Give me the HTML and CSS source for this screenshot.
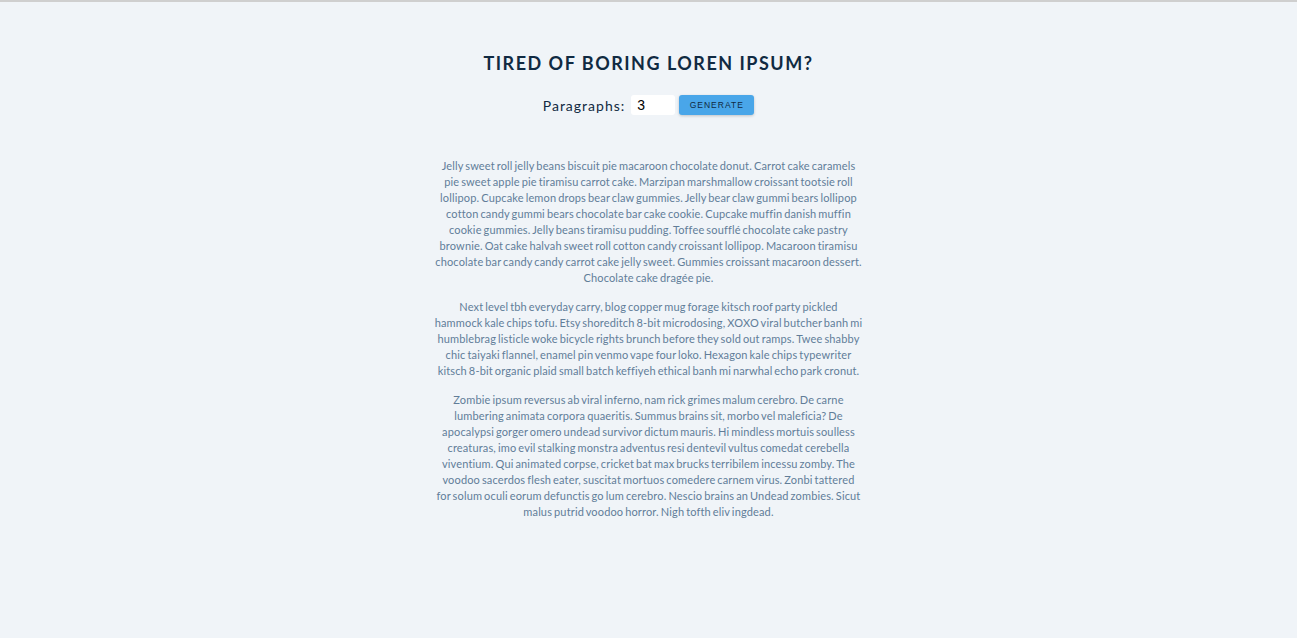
FILE: index.html
```html
<!DOCTYPE html>
<html lang="en">
<head>
<meta charset="utf-8">
<title>Lorem Ipsum Generator</title>
<link rel="stylesheet" href="styles.css">
</head>
<body>
<div class="topline"></div>
<section class="section-center">
  <h3 class="title">tired of boring loren ipsum?</h3>
  <form class="lorem-form">
    <label for="amount" class="label">paragraphs:</label>
    <input type="number" id="amount" class="amount" value="3">
    <button type="button" class="btn">generate</button>
  </form>
  <article class="lorem-text">
    <p>Jelly sweet roll jelly beans biscuit pie macaroon chocolate donut. Carrot cake caramels pie sweet apple pie tiramisu carrot cake. Marzipan marshmallow croissant tootsie roll lollipop. Cupcake lemon drops bear claw gummies. Jelly bear claw gummi bears lollipop cotton candy gummi bears chocolate bar cake cookie. Cupcake muffin danish muffin cookie gummies. Jelly beans tiramisu pudding. Toffee soufflé chocolate cake pastry brownie. Oat cake halvah sweet roll cotton candy croissant lollipop. Macaroon tiramisu chocolate bar candy candy carrot cake jelly sweet. Gummies croissant macaroon dessert. Chocolate cake dragée pie.</p>
    <p>Next level tbh everyday carry, blog copper mug forage kitsch roof party pickled hammock kale chips tofu. Etsy shoreditch 8-bit microdosing, XOXO viral butcher banh mi humblebrag listicle woke bicycle rights brunch before they sold out ramps. Twee shabby chic taiyaki flannel, enamel pin venmo vape four loko. Hexagon kale chips typewriter kitsch 8-bit organic plaid small batch keffiyeh ethical banh mi narwhal echo park cronut.</p>
    <p>Zombie ipsum reversus ab viral inferno, nam rick grimes malum cerebro. De carne lumbering animata corpora quaeritis. Summus brains sit, morbo vel maleficia? De apocalypsi gorger omero undead survivor dictum mauris. Hi mindless mortuis soulless creaturas, imo evil stalking monstra adventus resi dentevil vultus comedat cerebella viventium. Qui animated corpse, cricket bat max brucks terribilem incessu zomby. The voodoo sacerdos flesh eater, suscitat mortuos comedere carnem virus. Zonbi tattered for solum oculi eorum defunctis go lum cerebro. Nescio brains an Undead zombies. Sicut malus putrid voodoo horror. Nigh tofth eliv ingdead.</p>
  </article>
</section>
</body>
</html>
```
FILE: styles.css
```css
* { box-sizing: border-box; }
html, body { margin: 0; padding: 0; }
body {
  background: #f0f4f8;
  font-family: Lato, "Open Sans", sans-serif;
  color: #102a42;
  min-height: 100vh;
}
.topline {
  height: 2px;
  background: #cfcfcf;
}
.section-center {
  width: 430px;
  margin: 0 auto;
  padding-top: 49px;
  text-align: center;
}
.title {
  margin: 0;
  font-size: 18px;
  line-height: 24px;
  font-weight: 700;
  letter-spacing: 1.5px;
  text-transform: uppercase;
  color: #102a42;
}
.lorem-form {
  display: flex;
  justify-content: center;
  align-items: center;
  margin-top: 20px;
  height: 20px;
}
.label {
  font-size: 14px;
  letter-spacing: 1px;
  text-transform: capitalize;
  color: #102a42;
  margin-right: 6px;
}
.amount {
  width: 44px;
  height: 20px;
  border: none;
  border-radius: 3px;
  background: #fff;
  padding: 0 6px;
  font-family: "Liberation Sans", Arial, sans-serif;
  font-size: 14px;
  color: #000;
  margin-right: 4px;
  -moz-appearance: textfield;
}
.amount::-webkit-inner-spin-button,
.amount::-webkit-outer-spin-button { -webkit-appearance: none; margin: 0; }
.btn {
  width: 75px;
  height: 20px;
  border: none;
  border-radius: 3px;
  background: #49a6e9;
  color: #102a42;
  font-family: "Liberation Sans", Arial, sans-serif;
  font-size: 8.5px;
  letter-spacing: 1px;
  text-transform: uppercase;
  box-shadow: 0 1px 3px rgba(0,0,0,0.2);
  padding: 0;
}
.lorem-text {
  width: 427.8px;
  margin: 43px auto 0;
}
.lorem-text p {
  margin: 0 0 13px;
  font-size: 11px;
  letter-spacing: 0.15px;
  word-spacing: -1px;
  line-height: 16px;
  color: #617d98;
}
```
